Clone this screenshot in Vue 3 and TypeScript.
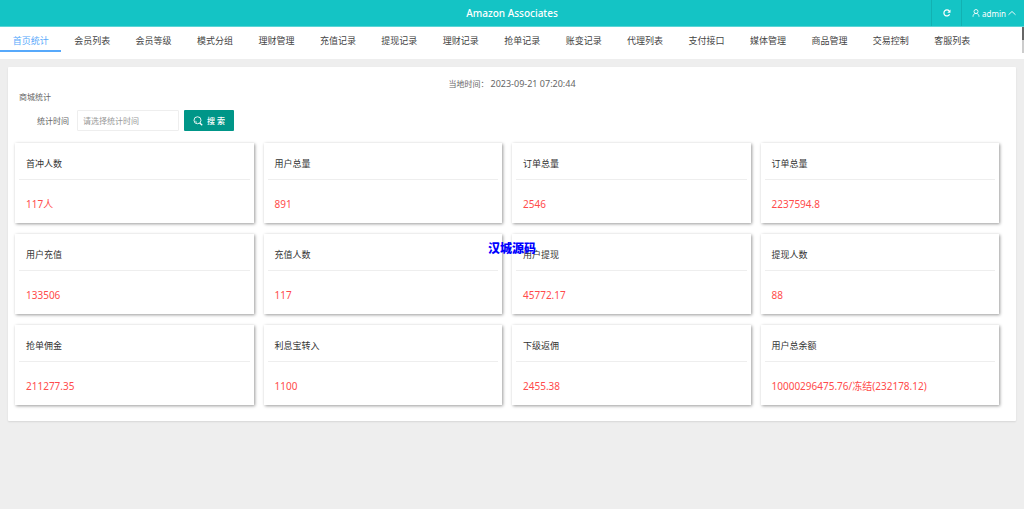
<script setup lang="ts">
import { ref } from 'vue'

interface Stat {
  label: string
  value: string
}

const tabs: string[] = [
  '首页统计', '会员列表', '会员等级', '模式分组', '理财管理', '充值记录', '提现记录', '理财记录',
  '抢单记录', '账变记录', '代理列表', '支付接口', '媒体管理', '商品管理', '交易控制', '客服列表',
]
const active = ref(0)
const range = ref('')

const stats: Stat[] = [
  { label: '首冲人数', value: '117人' },
  { label: '用户总量', value: '891' },
  { label: '订单总量', value: '2546' },
  { label: '订单总量', value: '2237594.8' },
  { label: '用户充值', value: '133506' },
  { label: '充值人数', value: '117' },
  { label: '用户提现', value: '45772.17' },
  { label: '提现人数', value: '88' },
  { label: '抢单佣金', value: '211277.35' },
  { label: '利息宝转入', value: '1100' },
  { label: '下级返佣', value: '2455.38' },
  { label: '用户总余额', value: '10000296475.76/冻结(232178.12)' },
]
</script>

<template>
  <div class="page">
    <header class="topbar">
      <h1 class="brand">Amazon Associates</h1>
      <div class="tools">
        <button class="tool refresh" type="button" aria-label="刷新">
          <svg width="8" height="8" viewBox="0 0 16 16" fill="none" stroke="currentColor" stroke-width="2.4">
            <path d="M13.2 10.6A6 6 0 1 1 12.4 4" />
            <path d="M15 1v6.4H8.6z" fill="currentColor" stroke="none" />
          </svg>
        </button>
        <button class="tool user" type="button">
          <svg width="8" height="8" viewBox="0 0 16 16" fill="none" stroke="currentColor" stroke-width="1.7">
            <circle cx="8" cy="5" r="4" />
            <path d="M2 15.500c0-4 2-6.600 6-6.600s6 2.600 6 6.600" />
          </svg>
          <span>admin</span>
          <svg width="8" height="8" viewBox="0 0 16 16" fill="none" stroke="currentColor" stroke-width="1.8">
            <path d="M1 11.500 8 5l7 6.500" />
          </svg>
        </button>
      </div>
    </header>

    <nav class="tabs">
      <a
        v-for="(tab, i) in tabs"
        :key="tab"
        href="#"
        class="tab"
        :class="{ active: i === active }"
        @click.prevent="active = i"
      >{{ tab }}</a>
      <span class="scroll-thumb"></span>
    </nav>

    <main class="panel">
      <p class="clock">当地时间： <time>2023-09-21 07:20:44</time></p>
      <h2 class="heading">商城统计</h2>
      <form class="search" @submit.prevent>
        <label for="range">统计时间</label>
        <input id="range" v-model="range" type="text" placeholder="请选择统计时间" />
        <button type="submit">
          <svg width="10" height="10" viewBox="0 0 20 20" fill="none" stroke="currentColor" stroke-width="1.8">
            <circle cx="9" cy="8.500" r="7" />
            <path d="M4.800 9.500a4.500 4.500 0 0 0 3.200 3.400" stroke-width="1.300" />
            <path d="m13.500 14 5 4.500" stroke-width="2.600" />
          </svg>
          <span>搜 索</span>
        </button>
      </form>

      <section class="grid">
        <article v-for="(s, i) in stats" :key="i" class="card">
          <h3>{{ s.label }}</h3>
          <p>{{ s.value }}</p>
        </article>
      </section>
    </main>

    <div class="watermark">汉城源码</div>
  </div>
</template>

<style>
body {
  margin: 0;
  background: #eee;
}
</style>

<style scoped>
.page {
  position: relative;
  min-height: 100vh;
  background: #eee;
  color: #666;
  font-family: "Noto Sans", "Noto Sans CJK SC", sans-serif;
  font-size: 8px;
}

.page * {
  box-sizing: border-box;
}

h1,
h2,
h3,
p {
  margin: 0;
  font-weight: 400;
}

button {
  border: 0;
  font-family: inherit;
  cursor: pointer;
}

.topbar {
  display: grid;
  grid-template-columns: 1fr auto 1fr;
  align-items: center;
  height: 27px;
  background: #14c4c5;
  border-bottom: 1px solid #5bd5d6;
  color: #fff;
}

.brand {
  grid-column: 2;
  font-size: 10px;
  font-weight: 500;
  line-height: 26px;
}

.tools {
  display: flex;
  justify-content: flex-end;
  height: 26px;
}

.tool {
  display: flex;
  align-items: center;
  justify-content: center;
  padding: 0;
  background: transparent;
  border-left: 1px solid #12b1b2;
  color: #fff;
  font-size: 8px;
}

.refresh {
  width: 30px;
}

.user {
  gap: 2px;
  padding: 0 8px 0 10px;
}

.tabs {
  position: relative;
  display: flex;
  height: 32px;
  background: #fff;
}

.tab {
  width: 6%;
  height: 25px;
  color: #444;
  font-size: 9px;
  line-height: 28px;
  text-align: center;
  text-decoration: none;
  white-space: nowrap;
}

.tab.active {
  color: #57a9fb;
  border-bottom: 2px solid #57a9fb;
}

.scroll-thumb {
  position: absolute;
  top: 0;
  right: 0;
  width: 2px;
  height: 26px;
  background: linear-gradient(#666 50%, #ccc 50%);
}

.panel {
  margin: 8px;
  padding: 10px 17px 16px 7px;
  background: #fff;
  border-radius: 1px;
  box-shadow: 0 1px 2px rgba(0, 0, 0, 0.1);
}

.clock {
  margin-right: -10px;
  line-height: 14px;
  text-align: center;
}

.clock time {
  font-size: 9px;
}

.heading {
  padding-left: 4px;
  font-size: 8px;
  line-height: 12px;
}

.search {
  display: flex;
  align-items: center;
  margin: 7px 0 12px;
  padding-left: 22px;
}

.search input {
  width: 102px;
  height: 21px;
  margin: 0 5px 0 8px;
  padding: 0 5px;
  background: #fff;
  border: 1px solid #eee;
  border-radius: 1px;
  color: #333;
  font-family: inherit;
  font-size: 8px;
}

.search input::placeholder {
  color: #999;
}

.search button {
  display: flex;
  align-items: center;
  justify-content: center;
  gap: 4px;
  width: 50px;
  height: 21px;
  padding: 0;
  background: #009688;
  border-radius: 1px;
  color: #fff;
  font-size: 8px;
  font-weight: 500;
}

.grid {
  display: grid;
  grid-template-columns: repeat(4, minmax(0, 1fr));
  gap: 11px 10px;
}

.card {
  padding: 0 4px;
  background: #fff;
  box-shadow: 1px 1px 3px rgba(0, 0, 0, 0.4);
}

.card h3 {
  height: 37px;
  padding: 6px 7px 0;
  border-bottom: 1px solid #eee;
  color: #333;
  font-size: 9px;
  line-height: 30px;
}

.card p {
  height: 43px;
  padding: 9px 7px 0;
  color: #ff4b4b;
  font-size: 10px;
  line-height: 30px;
  white-space: nowrap;
}

.watermark {
  position: absolute;
  top: 49%;
  left: 50%;
  transform: translate(-50%, -50%);
  color: #00f;
  font-size: 12px;
  font-weight: 900;
  line-height: 16px;
  white-space: nowrap;
  pointer-events: none;
}
</style>
